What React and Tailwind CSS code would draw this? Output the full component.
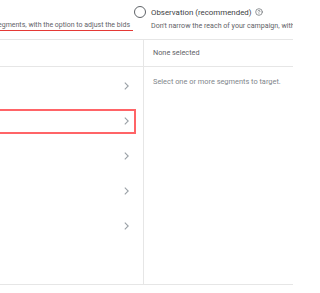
import { CircleHelp } from "lucide-react";

function Chevron() {
  return (
    <svg width="5" height="8" viewBox="0 0 5 8" fill="none">
      <path d="M0.8 0.6 L4.2 4 L0.8 7.4" stroke="#9aa0a6" strokeWidth="1.1" />
    </svg>
  );
}

export default function App() {
  const rows = [0, 1, 2, 3, 4];

  return (
    <div
      className="w-[293px] h-[293px] overflow-hidden bg-white flex flex-col"
      style={{ fontFamily: "Roboto, 'Liberation Sans', sans-serif" }}
    >
      {/* header with the two radio options */}
      <div className="h-[39px] flex items-start shrink-0 overflow-hidden">
        <div className="w-[133px] shrink-0 overflow-hidden flex justify-end mt-[20.5px] border-b-[1.5px] border-[#e53935] pr-[3px]">
          <span className="whitespace-nowrap text-[7px] leading-[9px] text-[#5f6368]">
            Narrow the reach of your campaign to the selected segments, with the option to adjust the bids
          </span>
        </div>
        <div className="ml-[1px] mt-[6px] w-[12px] h-[12px] rounded-full border-[1.5px] border-[#5f6368] shrink-0" />
        <div className="ml-[5px] mt-[6.5px] flex flex-col whitespace-nowrap min-w-0">
          <div className="flex items-center gap-[3px] text-[7.9px] leading-[11px] text-[#3c4043]">
            Observation (recommended)
            <CircleHelp size={8} color="#5f6368" strokeWidth={2} />
          </div>
          <div className="mt-[3px] text-[7.1px] leading-[9px] text-[#5f6368]">
            Don't narrow the reach of your campaign, with the option to adjust the bids
          </div>
        </div>
      </div>

      {/* two column picker */}
      <div className="h-[246px] shrink-0 flex border-y border-[#e6e6e6]">
        <div className="w-[144px] shrink-0 border-r border-[#e6e6e6] flex flex-col">
          <div className="h-[27px] border-b border-[#e6e6e6]" />
          {rows.map((r) => (
            <div key={r} className="h-[35px] flex items-center pr-[7px] pt-[3px]">
              {r === 1 ? (
                <div className="h-[25px] -ml-[10px] flex-1 flex items-center justify-end pr-[5px] border-2 border-solid border-red-400">
                  <Chevron />
                </div>
              ) : (
                <div className="h-[25px] -ml-[10px] flex-1 flex items-center justify-end pr-[7px]">
                  <Chevron />
                </div>
              )}
            </div>
          ))}
        </div>
        <div className="flex-1 flex flex-col whitespace-nowrap overflow-hidden">
          <div className="h-[27px] border-b border-[#e6e6e6] flex items-center pl-[9px] text-[7.3px] text-[#5f6368]">
            None selected
          </div>
          <div className="pl-[9px] mt-[10px] text-[7.4px] leading-[9px] text-[#80868b]">
            Select one or more segments to target.
          </div>
        </div>
      </div>
    </div>
  );
}
